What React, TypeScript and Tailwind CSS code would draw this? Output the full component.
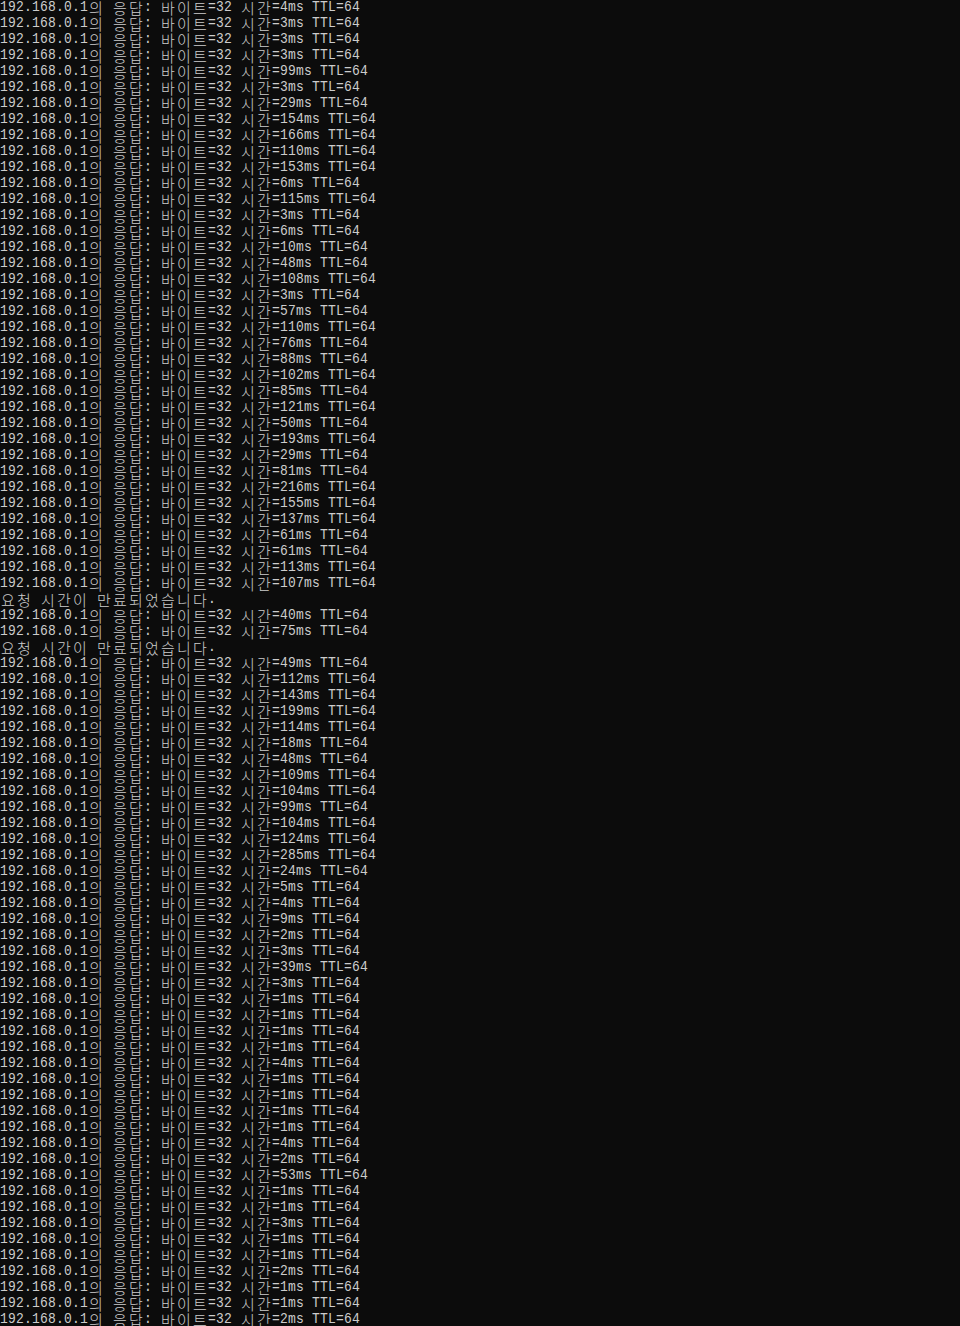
import React from "react";

const T: (number | null)[] = [
  4, 3, 3, 3, 99, 3, 29, 154, 166, 110, 153, 6, 115, 3, 6, 10, 48, 108, 3, 57, 110, 76, 88, 102, 85, 121, 50, 193, 29, 81, 216, 155, 137, 61, 61, 113, 107,
  null, 40, 75, null,
  49, 112, 143, 199, 114, 18, 48, 109, 104, 99, 104, 124, 285, 24, 5, 4, 9, 2, 3, 39, 3, 1, 1, 1, 1, 4, 1, 1, 1, 1, 4, 2, 53, 1, 1, 3, 1, 1, 2, 1, 1, 2,
];

const lines = T.map((t) =>
  t === null ? "요청 시간이 만료되었습니다." : `192.168.0.1의 응답: 바이트=32 시간=${t}ms TTL=64`
);

function Line({ text }: { text: string }) {
  return (
    <div className="flex h-[16px] leading-[16px]">
      {Array.from(text).map((ch, i) => {
        const wide = ch.charCodeAt(0) > 0x7f;
        return (
          <span
            key={i}
            className={
              wide
                ? "flex w-[16px] shrink-0 justify-center text-[15px] font-light font-['Noto_Sans_CJK_KR',sans-serif]"
                : "flex w-[8px] shrink-0 justify-center text-[13px] scale-y-[1.15] font-['Liberation_Mono','DejaVu_Sans_Mono',monospace]"
            }
          >
            {ch === " " ? "\u00a0" : ch}
          </span>
        );
      })}
    </div>
  );
}

export default function App() {
  return (
    <div className="h-[1326px] w-[960px] overflow-hidden bg-[#0c0c0c] text-[#cccccc]">
      {lines.map((l, i) => (
        <Line key={i} text={l} />
      ))}
    </div>
  );
}
